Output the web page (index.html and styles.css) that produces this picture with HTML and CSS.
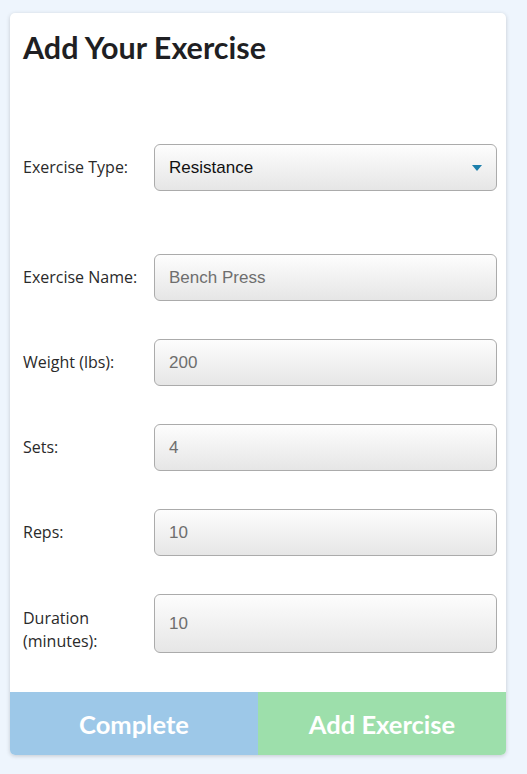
FILE: index.html
```html
<!DOCTYPE html>
<html>
<head>
<meta charset="utf-8">
<link rel="stylesheet" href="styles.css">
</head>
<body>
<div class="card">
  <h1 class="title">Add Your Exercise</h1>
  <form class="form">
    <div class="row row-type">
      <label class="label">Exercise Type:</label>
      <div class="field select">
        <span class="select-text">Resistance</span>
        <svg class="caret" width="10" height="6" viewBox="0 0 10 6"><path d="M0 0 H10 L5 6 Z" fill="#1c7fab"/></svg>
      </div>
    </div>
    <div class="row">
      <label class="label">Exercise Name:</label>
      <div class="field"><span class="value">Bench Press</span></div>
    </div>
    <div class="row">
      <label class="label">Weight (lbs):</label>
      <div class="field"><span class="value">200</span></div>
    </div>
    <div class="row">
      <label class="label">Sets:</label>
      <div class="field"><span class="value">4</span></div>
    </div>
    <div class="row">
      <label class="label">Reps:</label>
      <div class="field"><span class="value">10</span></div>
    </div>
    <div class="row">
      <label class="label label-bottom">Duration<br>(minutes):</label>
      <div class="field tall"><span class="value">10</span></div>
    </div>
  </form>
  <div class="actions">
    <button class="btn btn-complete" type="button">Complete</button>
    <button class="btn btn-add" type="button">Add Exercise</button>
  </div>
</div>
</body>
</html>
```
FILE: styles.css
```css
html, body {
  margin: 0;
  padding: 0;
}
body {
  background: #eef5fd;
  width: 527px;
  height: 774px;
  padding-top: 13px;
  padding-left: 10px;
  box-sizing: border-box;
}
.card {
  width: 496px;
  background: #ffffff;
  border-radius: 5px;
  box-shadow: 0 1px 4px rgba(0, 0, 0, 0.18);
  overflow: hidden;
}
.title {
  margin: 0;
  padding: 16px 0 0 13px;
  font-family: Lato, "Liberation Sans", sans-serif;
  font-weight: 700;
  font-size: 30.5px;
  line-height: 36px;
  color: #1f1f23;
}
.form {
  display: flex;
  flex-direction: column;
  gap: 38px;
  padding: 79px 9px 0 13px;
}
.row {
  display: flex;
  align-items: center;
}
.row-type {
  margin-bottom: 25px;
}
.label {
  width: 131px;
  flex: none;
  font-family: "Open Sans", "Noto Sans", sans-serif;
  font-weight: 400;
  font-size: 16px;
  line-height: 23px;
  color: #2a2a2a;
}
.label-bottom {
  align-self: flex-end;
}
.field {
  flex: 1;
  height: 47px;
  box-sizing: border-box;
  border: 1px solid #ababab;
  border-radius: 6px;
  background: linear-gradient(#fdfdfd, #e6e6e6);
  display: flex;
  align-items: center;
  padding: 0 14px;
  font-family: "Liberation Sans", Arial, sans-serif;
  font-size: 17px;
}
.field.tall {
  height: 59px;
}
.value {
  color: #6e6e6e;
}
.select-text {
  color: #111;
  flex: 1;
}
.actions {
  display: flex;
  margin-top: 39px;
}
.btn {
  flex: 1;
  height: 63px;
  border: none;
  margin: 0;
  font-family: Lato, "Liberation Sans", sans-serif;
  font-weight: 700;
  font-size: 25.5px;
  color: #ffffff;
  padding: 0;
}
.btn-complete {
  background: #9dc8e8;
}
.btn-add {
  background: #9ddfab;
}
```
